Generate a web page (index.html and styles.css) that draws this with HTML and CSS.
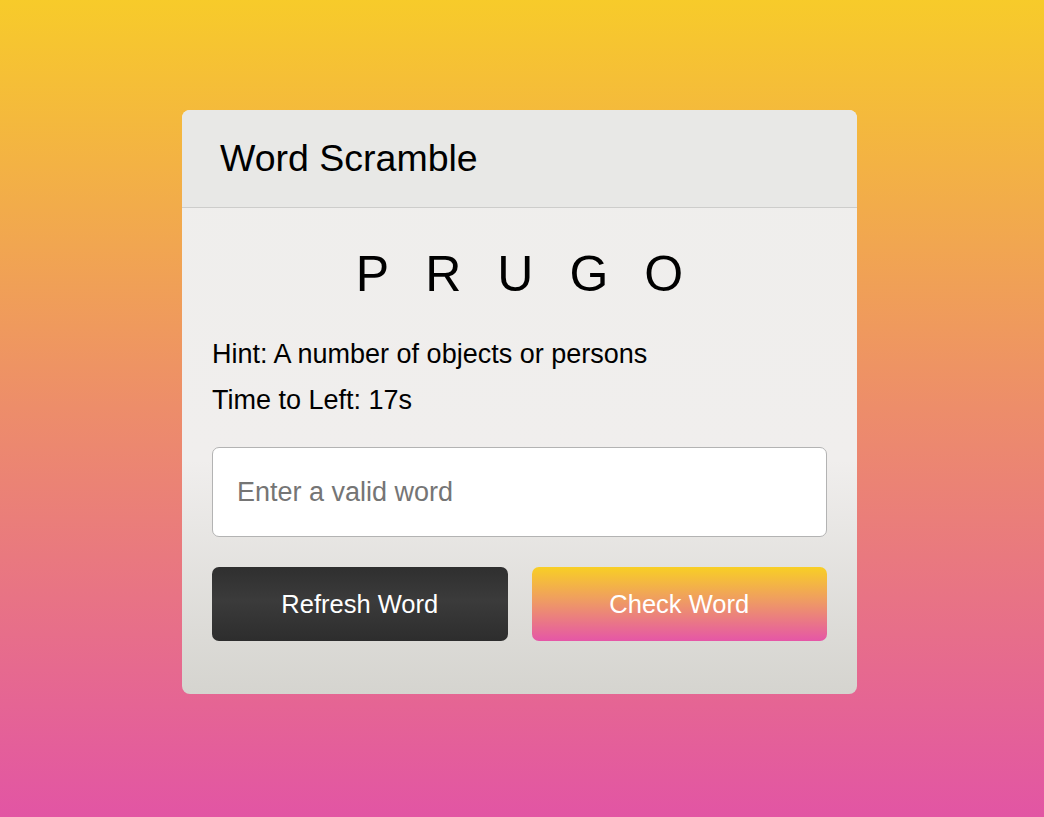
FILE: index.html
```html
<!DOCTYPE html>
<html lang="en">
<head>
<meta charset="utf-8">
<title>Word Scramble</title>
<link rel="stylesheet" href="styles.css">
</head>
<body>
<div class="container">
  <h2 class="title">Word Scramble</h2>
  <div class="content">
    <p class="word">prugo</p>
    <div class="details">
      <p class="line">Hint: <span>A number of objects or persons</span></p>
      <p class="line">Time to Left: <span>17s</span></p>
    </div>
    <input class="guess" type="text" placeholder="Enter a valid word">
    <div class="buttons">
      <button class="btn btn-refresh">Refresh Word</button>
      <button class="btn btn-check">Check Word</button>
    </div>
  </div>
</div>
</body>
</html>
```

FILE: styles.css
```css
* {
  margin: 0;
  padding: 0;
  box-sizing: border-box;
}
html, body {
  height: 100%;
}
body {
  font-family: "Liberation Sans", Arial, sans-serif;
  display: flex;
  align-items: center;
  justify-content: center;
  min-height: 100vh;
  padding: 0 5px 13px 0;
  background: linear-gradient(to bottom, #f7cb2a 0%, #ed8d6a 50%, #e255a4 100%);
}
.container {
  width: 675px;
  border-radius: 8px;
  background: linear-gradient(to bottom, #efeeec 0%, #f0eeed 60%, #d5d4cf 100%);
  overflow: hidden;
}
.title {
  font-size: 37.5px;
  font-weight: 400;
  color: #000;
  background: #e8e8e6;
  height: 98px;
  display: flex;
  align-items: center;
  padding: 0 38px;
  border-bottom: 1px solid #cdcdcb;
}
.content {
  padding: 38px 30px 53px;
}
.word {
  font-size: 50px;
  text-align: center;
  text-transform: uppercase;
  letter-spacing: 36px;
  margin-right: -36px;
  color: #000;
  line-height: 57px;
}
.details {
  margin: 36px 0 31px;
}
.line {
  font-size: 27px;
  line-height: 31px;
  color: #000;
  margin-bottom: 15px;
}
.line:last-child {
  margin-bottom: 0;
}
.guess {
  display: block;
  width: 100%;
  height: 90px;
  padding: 0 24px;
  font-size: 27px;
  font-family: "Liberation Sans", Arial, sans-serif;
  border: 1px solid #b3b3b3;
  border-radius: 7px;
  background: #fff;
  outline: none;
}
.guess::placeholder {
  color: #757575;
}
.buttons {
  display: flex;
  gap: 24px;
  margin-top: 30px;
}
.btn {
  flex: 1;
  height: 74px;
  border: none;
  border-radius: 7px;
  color: #fff;
  font-size: 25.5px;
  font-family: "Liberation Sans", Arial, sans-serif;
}
.btn-refresh {
  background: linear-gradient(to bottom, #2f2f2f 0%, #3b3b3b 45%, #2d2d2d 100%);
}
.btn-check {
  background: linear-gradient(to bottom, #f8cf25 0%, #ef9c62 45%, #e556a7 100%);
}
```
